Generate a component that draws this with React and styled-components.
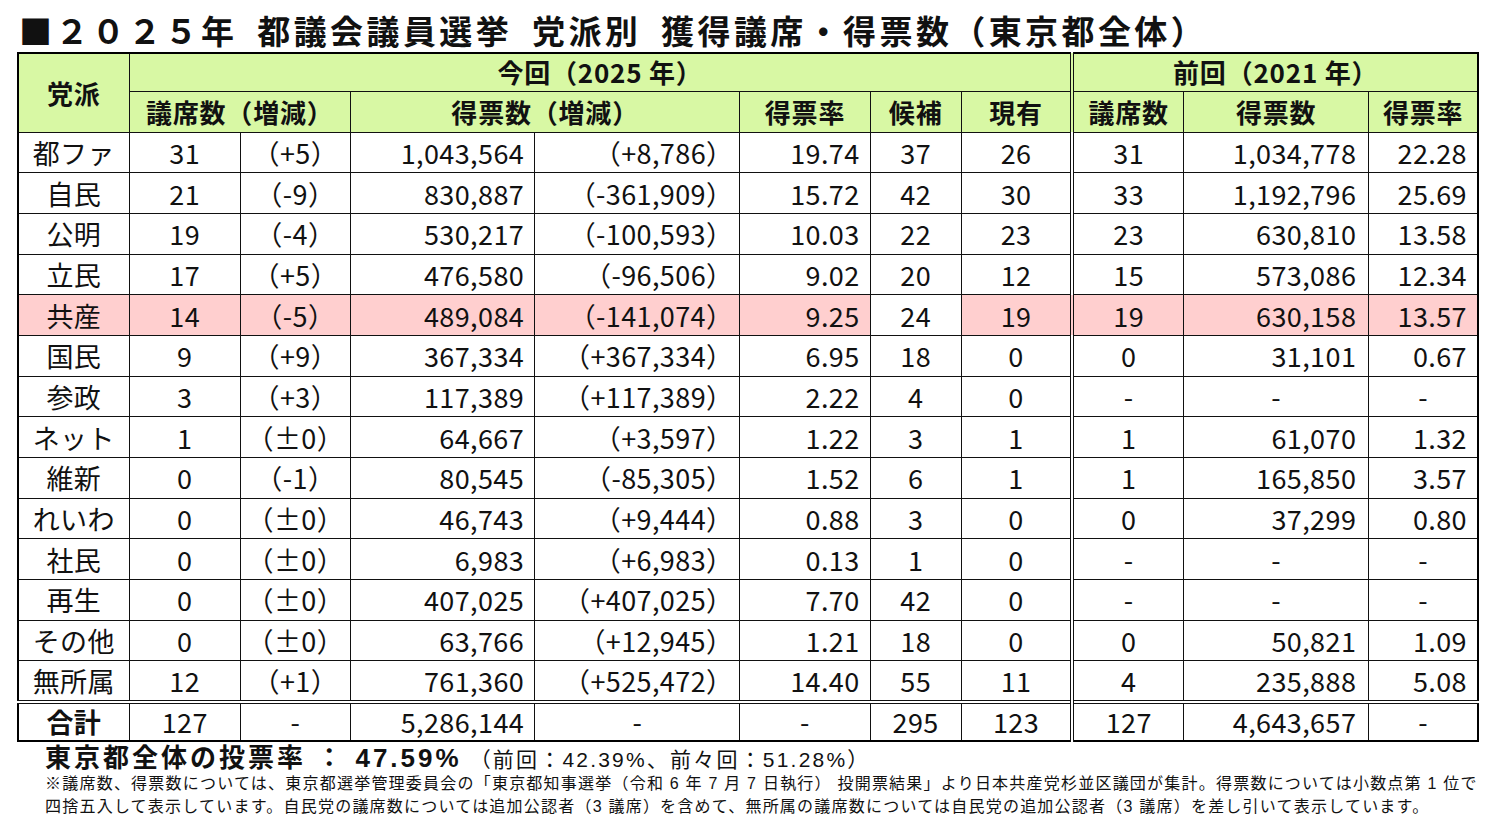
import React from "react";
import styled, { createGlobalStyle } from "styled-components";

const Global = createGlobalStyle`
  html, body { margin: 0; padding: 0; background: #fff; }
  body { font-family: "Noto Sans CJK JP", "Noto Sans", sans-serif; color: #111; }
`;

const Page = styled.div`
  width: 1500px;
  height: 833px;
  padding: 0 0 0 17px;
  box-sizing: border-box;
  overflow: hidden;
`;

const Title = styled.h1`
  margin: 0;
  height: 52px;
  padding-top: 14px;
  box-sizing: border-box;
  font-size: 33px;
  line-height: 33px;
  font-weight: 700;
  letter-spacing: 3.4px;
  white-space: pre;
  padding-left: 2px;
`;

const Table = styled.table`
  border-collapse: collapse;
  table-layout: fixed;
  width: 1462px;
  border: 2px solid #000;
`;

const Row = styled.tr`
  height: ${(p) => p.$h}px;
`;

const Th = styled.th`
  background: #d8f8a4;
  border: 1px solid #111;
  font-size: 26px;
  line-height: 1;
  font-weight: 700;
  padding: 0;
  text-align: center;
  letter-spacing: 0.8px;
  ${(p) => p.$dbl && `border-right: 4px double #111;`}
`;

const Td = styled.td`
  border: 1px solid #111;
  font-size: 27px;
  line-height: 1;
  font-weight: 400;
  padding: 0 ${(p) => (p.$align === "right" ? p.$pr : 0)}px 0 0;
  text-align: ${(p) => p.$align};
  background: ${(p) => (p.$pink ? "#ffcfcf" : "#fff")};
  white-space: nowrap;
  letter-spacing: 0.4px;
  ${(p) => p.$bold && `font-weight: 700;`}
  ${(p) => p.$dbl && `border-right: 4px double #111;`}
  ${(p) => p.$top && `border-top: 4px double #111;`}
`;

const Footer = styled.div`
  padding-left: 28px;
  font-family: "Liberation Sans", "Noto Sans CJK JP", sans-serif;
`;

const Rate = styled.div`
  display: flex;
  align-items: baseline;
  height: 30px;
  padding-top: 2px;
  box-sizing: border-box;
  line-height: 28px;
  white-space: pre;
`;

const RateMain = styled.span`
  font-size: 26px;
  font-weight: 700;
  letter-spacing: 3px;
`;

const RateSub = styled.span`
  font-size: 21px;
  font-weight: 400;
  margin-left: 8px;
  letter-spacing: 2.2px;
`;

const Note = styled.p`
  margin: 0;
  font-size: 16px;
  line-height: 23px;
  letter-spacing: 1.22px;
  white-space: nowrap;
`;

const cols = [111, 111, 110, 184, 205, 130, 91, 111, 111, 185, 109];
const aligns = ["center", "center", "center", "right", "right", "right", "center", "center", "center", "right", "right"];
const pads = [0, 0, 0, 10, 6, 10, 0, 0, 0, 12, 10];

const rows = [
  ["都ファ", "31", "（+5）", "1,043,564", "（+8,786）", "19.74", "37", "26", "31", "1,034,778", "22.28"],
  ["自民", "21", "（-9）", "830,887", "（-361,909）", "15.72", "42", "30", "33", "1,192,796", "25.69"],
  ["公明", "19", "（-4）", "530,217", "（-100,593）", "10.03", "22", "23", "23", "630,810", "13.58"],
  ["立民", "17", "（+5）", "476,580", "（-96,506）", "9.02", "20", "12", "15", "573,086", "12.34"],
  ["共産", "14", "（-5）", "489,084", "（-141,074）", "9.25", "24", "19", "19", "630,158", "13.57"],
  ["国民", "9", "（+9）", "367,334", "（+367,334）", "6.95", "18", "0", "0", "31,101", "0.67"],
  ["参政", "3", "（+3）", "117,389", "（+117,389）", "2.22", "4", "0", "-", "-", "-"],
  ["ネット", "1", "（±0）", "64,667", "（+3,597）", "1.22", "3", "1", "1", "61,070", "1.32"],
  ["維新", "0", "（-1）", "80,545", "（-85,305）", "1.52", "6", "1", "1", "165,850", "3.57"],
  ["れいわ", "0", "（±0）", "46,743", "（+9,444）", "0.88", "3", "0", "0", "37,299", "0.80"],
  ["社民", "0", "（±0）", "6,983", "（+6,983）", "0.13", "1", "0", "-", "-", "-"],
  ["再生", "0", "（±0）", "407,025", "（+407,025）", "7.70", "42", "0", "-", "-", "-"],
  ["その他", "0", "（±0）", "63,766", "（+12,945）", "1.21", "18", "0", "0", "50,821", "1.09"],
  ["無所属", "12", "（+1）", "761,360", "（+525,472）", "14.40", "55", "11", "4", "235,888", "5.08"],
];

const total = ["合計", "127", "-", "5,286,144", "-", "-", "295", "123", "127", "4,643,657", "-"];

function Cells({ data, pink, top, bold }) {
  return data.map((v, i) => {
    const align = v === "-" ? "center" : aligns[i];
    return (
      <Td
        key={i}
        $align={align}
        $pr={pads[i]}
        $pink={pink && i !== 6}
        $dbl={i === 7}
        $top={top}
        $bold={bold && i === 0}
      >
        {v}
      </Td>
    );
  });
}

export default function App() {
  return (
    <Page>
      <Global />
      <Title>{"■２０２５年\u2002都議会議員選挙\u2002党派別\u2002獲得議席・得票数（東京都全体）"}</Title>
      <Table>
        <colgroup>
          {cols.map((w, i) => (
            <col key={i} style={{ width: w }} />
          ))}
        </colgroup>
        <thead>
          <Row $h={38}>
            <Th rowSpan={2}>党派</Th>
            <Th colSpan={7} $dbl>今回（2025 年）</Th>
            <Th colSpan={3}>前回（2021 年）</Th>
          </Row>
          <Row $h={41}>
            <Th colSpan={2}>議席数（増減）</Th>
            <Th colSpan={2}>得票数（増減）</Th>
            <Th>得票率</Th>
            <Th>候補</Th>
            <Th $dbl>現有</Th>
            <Th>議席数</Th>
            <Th>得票数</Th>
            <Th>得票率</Th>
          </Row>
        </thead>
        <tbody>
          {rows.map((r, i) => (
            <Row key={i} $h={40.7}>
              <Cells data={r} pink={r[0] === "共産"} />
            </Row>
          ))}
          <Row $h={39}>
            <Cells data={total} top bold />
          </Row>
        </tbody>
      </Table>
      <Footer>
        <Rate>
          <RateMain>{"東京都全体の投票率 ： 47.59%"}</RateMain>
          <RateSub>（前回：42.39%、前々回：51.28%）</RateSub>
        </Rate>
        <Note>※議席数、得票数については、東京都選挙管理委員会の「東京都知事選挙（令和 6 年 7 月 7 日執行） 投開票結果」より日本共産党杉並区議団が集計。得票数については小数点第 1 位で</Note>
        <Note>四捨五入して表示しています。自民党の議席数については追加公認者（3 議席）を含めて、無所属の議席数については自民党の追加公認者（3 議席）を差し引いて表示しています。</Note>
      </Footer>
    </Page>
  );
}
